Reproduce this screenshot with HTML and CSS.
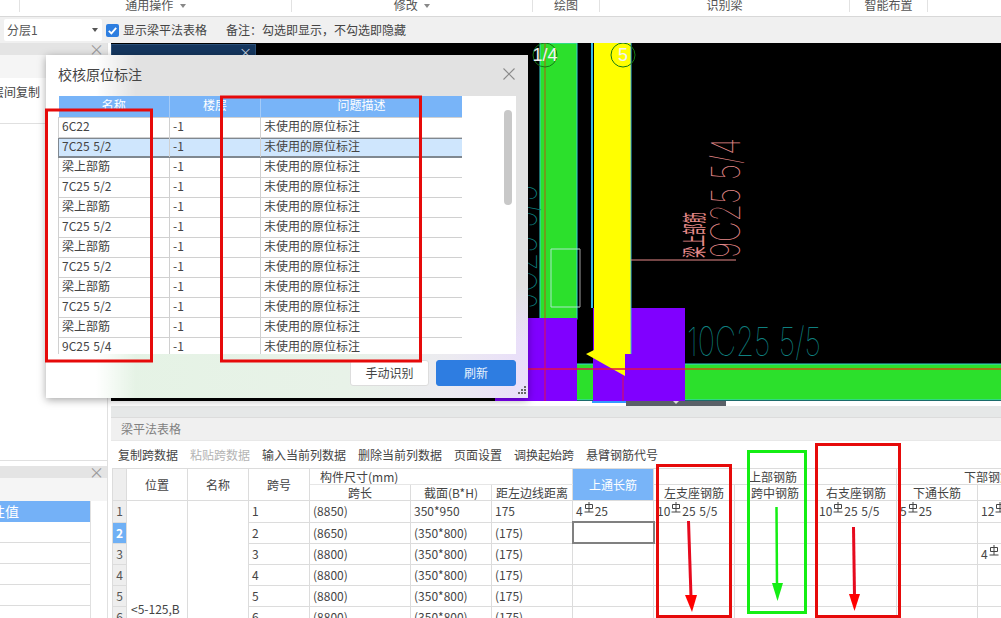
FILE: index.html
```html
<!DOCTYPE html>
<html lang="zh-CN">
<head>
<meta charset="utf-8">
<title>校核原位标注</title>
<link rel="stylesheet" href="styles.css">
</head>
<body>
<svg width="0" height="0" class="defs"><defs>
  <symbol id="rebar" viewBox="0 0 10 12"><path d="M1.5 2.5h7v4h-7zM5 0v10M0.5 10h9" fill="none" stroke="#444" stroke-width="1"/></symbol>
</defs></svg>
<div class="app">
  <header class="ribbon">
    <div class="rib w19"></div>
    <div class="rib w272"><span>通用操作 <i class="tri"></i></span></div>
    <div class="rib w241"><span>修改 <i class="tri"></i></span></div>
    <div class="rib w67"><span>绘图</span></div>
    <div class="rib w250"><span>识别梁</span></div>
    <div class="rib w78"><span>智能布置</span></div>
  </header>
  <div class="toolbar">
    <div class="select"><span>分层1</span><i class="tri dark"></i></div>
    <span class="check"><svg width="13" height="13" viewBox="0 0 13 13"><rect width="13" height="13" rx="2" fill="#2d7ee0"/><path d="M2.8 6.8l2.6 2.6 4.8-5.6" fill="none" stroke="#fff" stroke-width="1.8"/></svg></span>
    <span class="opt">显示梁平法表格</span>
    <span class="note">备注：勾选即显示，不勾选即隐藏</span>
  </div>
  <div class="main">
    <aside class="side">
      <div class="panel panel-top">
        <div class="ptitle"><span class="px">×</span></div>
        <div class="psub"></div>
        <div class="pcopy">层间复制</div>
        <div class="pgap"></div>
      </div>
      <div class="panel panel-bottom">
        <div class="ptitle"><span class="px">×</span></div>
        <div class="psub2"></div>
        <div class="plist">
          <div class="phead">属性值</div>
          <div class="prow"></div><div class="prow"></div><div class="prow"></div><div class="prow"></div><div class="prow"></div>
        </div>
      </div>
    </aside>
    <section class="work">
      <div class="cad">
        <svg class="cadsvg" width="890" height="358" viewBox="111 43 890 358">
          <rect x="111" y="43" width="890" height="358" fill="#000"/>
          <rect x="540" y="43" width="37" height="276" fill="#2ce02c" stroke="#35d6d6"/>
          <line x1="545" y1="43" x2="545" y2="318" stroke="#b25a10"/>
          <rect x="495" y="318" width="82" height="83" fill="#8000ff"/>
          <rect x="577" y="364" width="424" height="36" fill="#2ce02c"/>
          <line x1="577" y1="364" x2="1001" y2="364" stroke="#35d6d6"/>
          <line x1="577" y1="400" x2="1001" y2="400" stroke="#35d6d6"/>
          <line x1="592" y1="43" x2="592" y2="308" stroke="#35b8e6" stroke-width="2"/>
          <rect x="593" y="308" width="92" height="93" fill="#8000ff"/>
          <polygon points="594,43 631,43 631,354 625,354 625,376 586,354 594,350" fill="#ffff00"/>
          <line x1="631" y1="43" x2="631" y2="354" stroke="#35b8e6"/>
          <line x1="495" y1="369" x2="685" y2="369" stroke="#e0104a" stroke-width="1.4"/>
          <line x1="685" y1="369" x2="1001" y2="369" stroke="#c0560e" stroke-width="1.4"/>
          <line x1="545" y1="318" x2="545" y2="401" stroke="#e0104a"/>
          <line x1="623" y1="376" x2="623" y2="401" stroke="#e0104a"/>
          <path d="M580 249h-29v58h29" fill="none" stroke="#a8e8c8"/>
          <line x1="580" y1="249" x2="580" y2="307" stroke="#a0a0a0"/>
          <line x1="631" y1="260" x2="736" y2="260" stroke="#e88a8a"/>
          <circle cx="545" cy="55" r="12" fill="none" stroke="#157a15"/>
          <circle cx="623" cy="55" r="12" fill="none" stroke="#157a15"/>
          <text x="545" y="61" class="axis" text-anchor="middle">1/4</text>
          <text x="623" y="61" class="axis" text-anchor="middle">5</text>
          <text transform="translate(740 258) rotate(-90)" class="cadt pink" textLength="120" lengthAdjust="spacingAndGlyphs">9C25 5/4</text>
          <text transform="translate(703 258) rotate(-90)" class="cadcn pink" textLength="46" lengthAdjust="spacingAndGlyphs">梁上部筋</text>
          <text transform="translate(537 309) rotate(-90)" class="cadt teal" textLength="124" lengthAdjust="spacingAndGlyphs">9C25 5/5</text>
          <text x="687" y="356" class="cadt teal" textLength="134" lengthAdjust="spacingAndGlyphs">10C25 5/5</text>
        </svg>
        <div class="tab"><span>×</span></div>
      </div>
      <div class="strip"><div class="strip-blue"></div><div class="strip-thumb"><i></i></div></div>
      <div class="gap"></div>
      <div class="btitle">梁平法表格</div>
      <div class="bbar">
        <span>复制跨数据</span><span class="off">粘贴跨数据</span><span>输入当前列数据</span><span>删除当前列数据</span><span>页面设置</span><span>调换起始跨</span><span>悬臂钢筋代号</span>
      </div>
      <table class="grid">
        <colgroup>
          <col class="c14"><col class="c61"><col class="c61"><col class="c61"><col class="c101"><col class="c81"><col class="c81"><col class="c81"><col class="c81"><col class="c81"><col class="c81"><col class="c81"><col class="c81">
        </colgroup>
        <thead>
          <tr>
            <th rowspan="2" class="rn"></th><th rowspan="2">位置</th><th rowspan="2">名称</th><th rowspan="2">跨号</th>
            <th colspan="3" class="left">构件尺寸(mm)</th>
            <th rowspan="2" class="sel">上通长筋</th>
            <th colspan="3" class="up">上部钢筋</th>
            <th colspan="2" class="low">下部钢筋</th>
          </tr>
          <tr>
            <th>跨长</th><th>截面(B*H)</th><th>距左边线距离</th><th>左支座钢筋</th><th>跨中钢筋</th><th>右支座钢筋</th><th>下通长筋</th><th></th>
          </tr>
        </thead>
        <tbody>
          <tr><td class="rn">1</td><td rowspan="6" class="pos">&lt;5-125,B</td><td rowspan="6"></td><td>1</td><td>(8850)</td><td>350*950</td><td>175</td><td>4<svg class="rb"><use href="#rebar"/></svg>25</td><td>10<svg class="rb"><use href="#rebar"/></svg>25 5/5</td><td></td><td>10<svg class="rb"><use href="#rebar"/></svg>25 5/5</td><td>5<svg class="rb"><use href="#rebar"/></svg>25</td><td>12<svg class="rb"><use href="#rebar"/></svg></td></tr>
          <tr><td class="rn on">2</td><td>2</td><td>(8650)</td><td>(350*800)</td><td>(175)</td><td class="cur"></td><td></td><td></td><td></td><td></td><td></td></tr>
          <tr><td class="rn">3</td><td>3</td><td>(8800)</td><td>(350*800)</td><td>(175)</td><td></td><td></td><td></td><td></td><td></td><td>4<svg class="rb"><use href="#rebar"/></svg></td></tr>
          <tr><td class="rn">4</td><td>4</td><td>(8800)</td><td>(350*800)</td><td>(175)</td><td></td><td></td><td></td><td></td><td></td><td></td></tr>
          <tr><td class="rn">5</td><td>5</td><td>(8800)</td><td>(350*800)</td><td>(175)</td><td></td><td></td><td></td><td></td><td></td><td></td></tr>
          <tr><td class="rn">6</td><td>6</td><td>(8800)</td><td>(350*800)</td><td>(175)</td><td></td><td></td><td></td><td></td><td></td><td></td></tr>
        </tbody>
      </table>
    </section>
  </div>

  <div class="dialog">
    <div class="dhead"><span class="dtitle">校核原位标注</span><svg class="dclose" width="12" height="12" viewBox="0 0 12 12"><path d="M.5.5l11 11M11.5.5l-11 11" stroke="#8a8a8a" stroke-width="1.1" fill="none"/></svg></div>
    <div class="dbody">
      <div class="dscroll">
        <table class="dtable">
          <colgroup><col class="d1"><col class="d2"><col class="d3"></colgroup>
          <thead><tr><th>名称</th><th>楼层</th><th>问题描述</th></tr></thead>
          <tbody>
            <tr><td>6C22</td><td>-1</td><td>未使用的原位标注</td></tr>
            <tr class="hit"><td>7C25 5/2</td><td>-1</td><td>未使用的原位标注</td></tr>
            <tr><td>梁上部筋</td><td>-1</td><td>未使用的原位标注</td></tr>
            <tr><td>7C25 5/2</td><td>-1</td><td>未使用的原位标注</td></tr>
            <tr><td>梁上部筋</td><td>-1</td><td>未使用的原位标注</td></tr>
            <tr><td>7C25 5/2</td><td>-1</td><td>未使用的原位标注</td></tr>
            <tr><td>梁上部筋</td><td>-1</td><td>未使用的原位标注</td></tr>
            <tr><td>7C25 5/2</td><td>-1</td><td>未使用的原位标注</td></tr>
            <tr><td>梁上部筋</td><td>-1</td><td>未使用的原位标注</td></tr>
            <tr><td>7C25 5/2</td><td>-1</td><td>未使用的原位标注</td></tr>
            <tr><td>梁上部筋</td><td>-1</td><td>未使用的原位标注</td></tr>
            <tr><td>9C25 5/4</td><td>-1</td><td>未使用的原位标注</td></tr>
          </tbody>
        </table>
      </div>
      <div class="dbar"><i></i></div>
    </div>
    <div class="dfoot"><button class="btn">手动识别</button><button class="btn primary">刷新</button></div>
    <svg class="grip" width="9" height="9" viewBox="0 0 9 9"><path d="M6 0h2v2H6zM3 3h2v2H3zM6 3h2v2H6zM0 6h2v2H0zM3 6h2v2H3zM6 6h2v2H6z" fill="#666"/></svg>
  </div>

  <svg class="marks" width="1001" height="618" viewBox="0 0 1001 618">
    <g fill="none" stroke="#e60a0a" stroke-width="3">
      <rect x="46.5" y="110" width="105" height="251"/>
      <rect x="221.5" y="97" width="199" height="264"/>
      <rect x="657.5" y="465.5" width="73" height="151"/>
      <rect x="816.5" y="444.5" width="83" height="172"/>
    </g>
    <rect x="748.5" y="451.5" width="57" height="161" fill="none" stroke="#14ee14" stroke-width="3"/>
    <path d="M688.5 521l2.5 76" stroke="#e60a1e" stroke-width="3"/>
    <polygon points="685,595 697,595 692,612" fill="#f00"/>
    <path d="M776.5 507l.5 78" stroke="#14ee14" stroke-width="2.5"/>
    <polygon points="772,583 783,583 777.5,601" fill="#14ee14"/>
    <path d="M853.5 527l1 69" stroke="#e60a1e" stroke-width="3"/>
    <polygon points="849,594 860,594 854.5,611" fill="#f00"/>
  </svg>
</div>
</body>
</html>
```
FILE: styles.css
```css
* { box-sizing: border-box; }
html, body { margin: 0; padding: 0; height: 618px; overflow: hidden; background: #fff; }
body { font: 12px/18px "Noto Sans CJK SC", "Liberation Sans", sans-serif; color: #3c3c3c; }
.defs { position: absolute; }
.app { position: relative; width: 1001px; height: 618px; overflow: hidden; display: flex; flex-direction: column; }

.ribbon { height: 17px; flex: none; display: flex; background: #fff; border-bottom: 1px solid #d8d8d8; overflow: hidden; }
.rib { height: 12px; border-right: 1px solid #e2e2e2; display: flex; justify-content: center; align-items: flex-end; }
.rib span { line-height: 18px; margin-bottom: -2px; white-space: nowrap; color: #555; }
.w19 { width: 20px; }
.w272 { width: 272px; }
.w241 { width: 241px; }
.w67 { width: 67px; }
.w250 { width: 250px; }
.w78 { width: 78px; }
.tri { display: inline-block; width: 0; height: 0; border: 3px solid transparent; border-top: 4px solid #888; border-bottom: 0; margin-left: 4px; vertical-align: 2px; }
.tri.dark { border-top-color: #555; margin: 0; vertical-align: 0; }

.toolbar { height: 26px; flex: none; background: #f0f0f0; display: flex; align-items: center; padding-left: 4px; }
.select { width: 98px; height: 22px; background: #fff; display: flex; align-items: center; justify-content: space-between; padding: 0 4px 0 3px; font-size: 12px; color: #555; border-radius: 2px; }
.check { margin-left: 4px; width: 13px; height: 13px; display: flex; }
.opt { margin-left: 4px; color: #444; }
.note { margin-left: 19px; color: #444; }

.main { flex: 1; display: flex; min-height: 0; }
.side { width: 108px; flex: none; border-right: 1px solid #e0e0e0; display: flex; flex-direction: column; }
.panel-top { height: 418px; border-bottom: 1px solid #e0e0e0; flex: none; }
.ptitle { height: 12px; background: #e4e4e4; display: flex; justify-content: flex-end; align-items: center; padding-right: 3px; }
.px { color: #999; font-size: 15px; line-height: 12px; }
.psub { height: 23px; background: #f5f5f5; }
.pcopy { height: 27px; line-height: 28px; text-indent: -8px; white-space: nowrap; overflow: hidden; color: #444; }
.pgap { height: 19px; border-bottom: 1px solid #e0e0e0; }
.panel-bottom { margin-top: 5px; flex: 1; }
.psub2 { height: 23px; background: #f5f5f5; }
.plist { width: 91px; border-right: 1px solid #e0e0e0; }
.phead { height: 21px; background: #74b1f7; color: #fff; text-indent: -23px; white-space: nowrap; overflow: hidden; line-height: 21px; font-size: 14px; }
.prow { height: 21px; border-bottom: 1px solid #dcdcdc; }

.work { width: 893px; flex: none; display: flex; flex-direction: column; min-width: 0; padding-left: 3px; }
.cad { position: relative; height: 358px; flex: none; background: #000; overflow: hidden; }
.cadsvg { display: block; }
.tab { position: absolute; left: 0; top: 1px; width: 145px; height: 16px; background: #14365e; border: 1px solid #2b5078; color: #c8d4e0; display: flex; justify-content: flex-end; padding-right: 3px; line-height: 13px; font-size: 13px; }
.axis { font: 18px "Liberation Sans", sans-serif; fill: #f2f2f2; }
.cadt { font: 100 40px "Inter", "Liberation Sans", sans-serif; }
.cadcn { font: 24px "Noto Sans CJK SC", sans-serif; }
.pink { fill: #e68a8a; }
.teal { fill: #0f8080; }

.strip { height: 5px; flex: none; background: #fff; display: flex; padding-left: 481px; }
.strip-blue { width: 34px; height: 2px; background: #3399ff; }
.strip-thumb { width: 100px; height: 5px; background: #5a6068; display: flex; justify-content: center; }
.strip-thumb i { width: 0; height: 0; border: 3px solid transparent; border-top: 3px solid #d8d8d8; border-bottom: 0; }
.gap { height: 12px; flex: none; background: #e6e8e8; border-bottom: 1px solid #dcdcdc; }
.btitle { height: 22px; flex: none; background: #f0f0f0; color: #808080; line-height: 22px; padding-left: 10px; }
.bbar { height: 28px; flex: none; display: flex; gap: 12px; align-items: center; padding-left: 7px; border-top: 1px solid #e8e8e8; color: #444; white-space: nowrap; }
.bbar .off { color: #b4b4b4; }

.grid { border-collapse: collapse; table-layout: fixed; width: 946px; flex: none; margin-left: 1px; }
.c14 { width: 14px; }
.c61 { width: 61px; }
.c101 { width: 101px; }
.c81 { width: 81px; }
.grid th, .grid td { border: 1px solid #dcdcdc; padding: 0 3px; font-weight: 400; white-space: nowrap; overflow: hidden; word-spacing: 1px; }
.grid th { height: 16px; line-height: 15px; color: #444; text-align: center; }
.grid td { height: 21px; line-height: 19px; padding-bottom: 1px; color: #444; }
.grid th.left { text-align: left; padding-left: 10px; border-bottom-color: #e6e6e6; }
.grid th.sel { background: #78b4f8; color: #fff; }
.grid th.up { text-align: left; padding-left: 95px; }
.grid th.low { text-align: left; padding-left: 67px; }
.grid .rn { background: #eee; text-align: center; padding: 0 0 1px; color: #555; }
.grid .rn.on { background: #6fb0f5; color: #fff; font-weight: 700; }
.grid .cur { border: 2px solid #808080; padding: 0; }
.grid .pos { vertical-align: bottom; padding: 0 0 9px 4px; }
.rb { width: 10px; height: 12px; vertical-align: 2px; margin: 0 1px; }

.dialog { position: absolute; left: 46px; top: 55px; width: 482px; height: 343px; display: flex; flex-direction: column; box-shadow: 0 2px 8px rgba(0,0,0,.35);
  background:
    linear-gradient(90deg, rgba(255,255,255,1) 0, rgba(255,255,255,1) 50px, rgba(255,255,255,0) 90px),
    linear-gradient(180deg, #e2e2e2 0, #e2e2e2 230px, rgba(226,226,226,0) 285px),
    linear-gradient(90deg, #e4f3e4 0, #e8f2e8 300px, #ecebf0 400px, #e9defa 100%); }
.dhead { height: 41px; flex: none; display: flex; justify-content: space-between; align-items: center; padding: 0 13px 3px 12px; }
.dtitle { font-size: 14px; color: #444; }
.dbody { margin-left: 12px; width: 458px; height: 258px; flex: none; background: #fff; display: flex; overflow: hidden; }
.dscroll { width: 404px; flex: none; overflow: hidden; }
.dtable { border-collapse: collapse; table-layout: fixed; width: 404px; }
.d1 { width: 111px; }
.d2 { width: 91px; }
.d3 { width: 202px; }
.dtable th { height: 21px; line-height: 18px; padding: 0 0 2px; background: #78b4f8; color: #fff; font-weight: 400; border-right: 1px solid #a4cbf8; }
.dtable td { height: 20px; line-height: 15px; border: 1px solid #d0d0d0; padding: 0 3px 4px; color: #444; white-space: nowrap; overflow: hidden; word-spacing: 1px; }
.dtable tr.hit td { background: #cfe6fd; border-top-color: #808890; border-bottom-color: #808890; box-shadow: inset 0 1px #808890, inset 0 -1px #808890; }
.dtable tr.hit td:first-child { border-left-color: #808890; }
.dtable tr.hit td:last-child { border-right-color: #808890; }
.dbar { flex: 1; padding: 14px 4px 0 42px; }
.dbar i { display: block; width: 8px; height: 95px; border-radius: 4px; background: #c8c8c8; }
.dfoot { flex: 1; display: flex; justify-content: flex-end; gap: 7px; padding: 6px 12px 0 0; }
.btn { width: 79px; height: 26px; padding: 0; font: 12px/18px "Noto Sans CJK SC", sans-serif; background: #fff; border: 1px solid #ddd; border-radius: 3px; color: #444; }
.btn.primary { width: 80px; background: #2e7de1; border-color: #2e7de1; color: #e8f1fc; }
.grip { position: absolute; right: 1px; bottom: 3px; }
.marks { position: absolute; left: 0; top: 0; pointer-events: none; }
```
